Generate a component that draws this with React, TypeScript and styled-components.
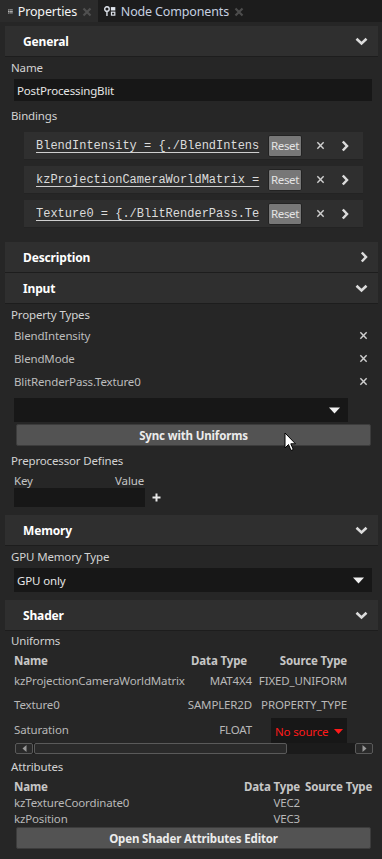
import React from 'react';
import styled, { createGlobalStyle } from 'styled-components';

const Global = createGlobalStyle`
  html, body { margin: 0; padding: 0; background: #262626; }
  body { font-family: "Noto Sans", "Open Sans", sans-serif; font-size: 11.5px; letter-spacing: -0.15px; color: #d2d2d2; }
  * { box-sizing: border-box; }
`;

const Page = styled.div`
  position: relative;
  width: 382px;
  height: 859px;
  overflow: hidden;
  background: #262626;
`;

const TabBar = styled.div`
  display: flex;
  height: 22px;
  background: #1c1c1c;
`;

const Tab = styled.div<{ $active?: boolean; $w: number }>`
  display: flex;
  align-items: center;
  gap: 5px;
  height: 22px;
  width: ${p => p.$w}px;
  padding-left: ${p => (p.$active ? 8 : 6)}px;
  background: ${p => (p.$active ? '#2b2b2b' : 'transparent')};
  border-top: 1px solid ${p => (p.$active ? '#2b2b2b' : '#1c1c1c')};
  color: ${p => (p.$active ? '#f4f4f4' : '#c6d0e0')};
  font-size: 12.5px;
  white-space: nowrap;
`;

const TabClose = styled.span`
  margin-left: auto;
  margin-right: 6px;
  display: flex;
`;

const Panel = styled.div`
  display: flex;
  flex-direction: column;
  padding: 0 4px 0 5px;
`;

const Header = styled.div<{ $top: number }>`
  display: flex;
  align-items: center;
  justify-content: space-between;
  height: 31px;
  margin-top: ${p => p.$top}px;
  padding: 0 10px 0 18px;
  background: #2f2f2f;
  border-bottom: 1px solid #1d1d1d;
  color: #ffffff;
  font-weight: 700;
  font-size: 12px;
`;

const Label = styled.div<{ $top: number; $h?: number }>`
  margin-top: ${p => p.$top}px;
  padding-left: 6px;
  height: ${p => p.$h ?? 16}px;
  line-height: ${p => p.$h ?? 16}px;
  color: #d3d3d3;
`;

const TextField = styled.div<{ $top: number; $w: number; $h: number }>`
  display: flex;
  align-items: center;
  justify-content: space-between;
  margin: ${p => p.$top}px 0 0 9px;
  width: ${p => p.$w}px;
  height: ${p => p.$h}px;
  padding: 0 8px 0 3px;
  background: #171717;
  color: #e6e6e6;
`;

const BindingList = styled.div`
  display: flex;
  flex-direction: column;
  gap: 6px;
  margin: 8px 0 0 19px;
  width: 339px;
`;

const BindingRow = styled.div`
  display: flex;
  align-items: center;
  height: 28px;
  padding-left: 12px;
  background: #2f2f2f;
  border-bottom: 1px solid #232323;
`;

const BindingText = styled.span`
  width: 224px;
  overflow: hidden;
  white-space: nowrap;
  font-family: "Liberation Mono", "DejaVu Sans Mono", monospace;
  font-size: 12px;
  letter-spacing: 0;
  color: #dcdcdc;
  text-decoration: underline;
  text-underline-offset: 3px;
  text-decoration-color: #cfcfcf;
`;

const ResetButton = styled.span`
  display: flex;
  align-items: center;
  justify-content: center;
  margin-left: 8px;
  width: 34px;
  height: 22px;
  background: #777777;
  border: 1px solid #222;
  border-radius: 2px;
  color: #e4e4e4;
  font-size: 11.5px;
  letter-spacing: -0.4px;
`;

const IconSlot = styled.span<{ $w: number }>`
  display: flex;
  align-items: center;
  justify-content: center;
  width: ${p => p.$w}px;
`;

const PropList = styled.div`
  display: flex;
  flex-direction: column;
  margin-top: 1px;
`;

const PropRow = styled.div`
  display: flex;
  align-items: center;
  justify-content: space-between;
  height: 23px;
  padding: 0 10px 0 9px;
  color: #bdbdbd;
`;

const WideButton = styled.div<{ $top: number }>`
  display: flex;
  align-items: center;
  justify-content: center;
  margin: ${p => p.$top}px 0 0 11px;
  width: 355px;
  height: 22px;
  background: #535353;
  border: 1px solid #3c3c3c;
  border-radius: 2px;
  color: #ececec;
  font-weight: 700;
`;

const KVHead = styled.div`
  display: flex;
  justify-content: space-between;
  margin: 5px 0 0 9px;
  width: 130px;
  height: 14px;
  line-height: 14px;
  color: #c4c4c4;
`;

const KVRow = styled.div`
  display: flex;
  align-items: center;
  gap: 7px;
`;

const Grid = styled.div<{ $cols: string; $top: number }>`
  display: grid;
  grid-template-columns: ${p => p.$cols};
  margin: ${p => p.$top}px 0 0 9px;
  align-items: center;
  color: #b8b8b8;
`;

const Cell = styled.div<{ $h: number; $align?: 'left' | 'right'; $bold?: boolean; $pr?: number; $pl?: number }>`
  height: ${p => p.$h}px;
  line-height: ${p => p.$h}px;
  text-align: ${p => p.$align ?? 'left'};
  font-weight: ${p => (p.$bold ? 700 : 400)};
  color: ${p => (p.$bold ? '#c6c6c6' : '#b8b8b8')};
  padding-right: ${p => p.$pr ?? 0}px;
  padding-left: ${p => p.$pl ?? 0}px;
  white-space: nowrap;
`;

const SourceSelect = styled.div`
  display: flex;
  align-items: center;
  justify-content: space-between;
  justify-self: end;
  width: 76px;
  height: 25px;
  margin-top: 1px;
  padding: 2px 4px 0 4px;
  background: #171717;
  color: #ff1a1a;
  white-space: nowrap;
`;

const Scrollbar = styled.div`
  display: flex;
  align-items: stretch;
  margin-left: 10px;
  width: 358px;
  height: 11px;
  background: #1b1b1b;
`;

const ScrollButton = styled.div`
  display: flex;
  align-items: center;
  justify-content: center;
  width: 18px;
  background: #2a2a2a;
  border: 1px solid #5a5a5a;
  border-radius: 2px;
`;

const ScrollThumb = styled.div`
  width: 253px;
  margin-left: 1px;
  background: #2a2a2a;
  border: 1px solid #5a5a5a;
  border-radius: 2px;
`;

const ScrollGap = styled.div`
  flex: 1;
`;

const Cursor = styled.svg`
  position: absolute;
  left: 284px;
  top: 432px;
`;

const ChevronDown = () => (
  <svg width="13" height="9" viewBox="0 0 13 9">
    <polyline points="1.5,1.8 6.5,6.5 11.5,1.8" fill="none" stroke="#dcdcdc" strokeWidth="2.6" />
  </svg>
);

const ChevronRight = ({ c = '#dcdcdc' }: { c?: string }) => (
  <svg width="8" height="12" viewBox="0 0 8 12">
    <polyline points="1.8,1.5 6,6 1.8,10.5" fill="none" stroke={c} strokeWidth="2.5" />
  </svg>
);

const Cross = ({ s = 9, c = '#cfcfcf', w = 1.6 }: { s?: number; c?: string; w?: number }) => (
  <svg width={s} height={s} viewBox="0 0 10 10">
    <path d="M1.5 1.5 L8.5 8.5 M8.5 1.5 L1.5 8.5" stroke={c} strokeWidth={w} fill="none" />
  </svg>
);

const TriDown = ({ c = '#f0f0f0', w = 11 }: { c?: string; w?: number }) => (
  <svg width={w} height="7" viewBox="0 0 11 7">
    <polygon points="0,0.5 11,0.5 5.5,6.5" fill={c} />
  </svg>
);

const Plus = () => (
  <svg width="9" height="9" viewBox="0 0 9 9">
    <path d="M4.5 0.5 V8.5 M0.5 4.5 H8.5" stroke="#e8e8e8" strokeWidth="2" />
  </svg>
);

const ListIcon = () => (
  <svg width="11" height="9" viewBox="0 0 11 9">
    <rect x="0" y="0" width="2" height="2" fill="#e8e8e8" />
    <rect x="3" y="0" width="8" height="1.6" fill="#e8e8e8" />
    <rect x="0" y="3.5" width="2" height="2" fill="#e8e8e8" />
    <rect x="3" y="3.5" width="8" height="1.6" fill="#e8e8e8" />
    <rect x="0" y="7" width="2" height="2" fill="#e8e8e8" />
    <rect x="3" y="7" width="8" height="1.6" fill="#e8e8e8" />
  </svg>
);

const NodeIcon = () => (
  <svg width="12" height="11" viewBox="0 0 12 11">
    <circle cx="3" cy="3" r="2.3" fill="none" stroke="#dfe4ec" strokeWidth="1.4" />
    <path d="M3 5.4 V10" stroke="#dfe4ec" strokeWidth="1.4" />
    <rect x="7" y="1" width="4.5" height="3.5" fill="#dfe4ec" />
    <rect x="7.6" y="6.2" width="3.4" height="3" fill="none" stroke="#dfe4ec" strokeWidth="1.2" />
  </svg>
);

const SmallTri = ({ dir }: { dir: 'l' | 'r' }) => (
  <svg width="5" height="7" viewBox="0 0 5 7">
    <polygon points={dir === 'l' ? '4.5,0 4.5,7 0.5,3.5' : '0.5,0 0.5,7 4.5,3.5'} fill="#9a9a9a" />
  </svg>
);

const bindings = [
  'BlendIntensity = {./BlendIntens',
  'kzProjectionCameraWorldMatrix =',
  'Texture0 = {./BlitRenderPass.Te',
];

const propTypes = ['BlendIntensity', 'BlendMode', 'BlitRenderPass.Texture0'];

export default function App() {
  return (
    <Page>
      <Global />
      <TabBar>
        <Tab $active $w={98}>
          <ListIcon />
          <span>Properties</span>
          <TabClose><Cross s={10} c="#505050" w={2.2} /></TabClose>
        </Tab>
        <Tab $w={152}>
          <NodeIcon />
          <span>Node Components</span>
          <TabClose><Cross s={10} c="#4c4c4c" w={2.2} /></TabClose>
        </Tab>
      </TabBar>
      <Panel>
        <Header $top={4}>
          <span>General</span>
          <ChevronDown />
        </Header>
        <Label $top={3}>Name</Label>
        <TextField $top={3} $w={358} $h={22}>PostProcessingBlit</TextField>
        <Label $top={7}>Bindings</Label>
        <BindingList>
          {bindings.map(b => (
            <BindingRow key={b}>
              <BindingText>{b}</BindingText>
              <ResetButton>Reset</ResetButton>
              <IconSlot $w={36}><Cross /></IconSlot>
              <IconSlot $w={14}><ChevronRight /></IconSlot>
            </BindingRow>
          ))}
        </BindingList>
        <Header $top={14}>
          <span>Description</span>
          <ChevronRight />
        </Header>
        <Header $top={0}>
          <span>Input</span>
          <ChevronDown />
        </Header>
        <Label $top={3}>Property Types</Label>
        <PropList>
          {propTypes.map(p => (
            <PropRow key={p}>
              <span>{p}</span>
              <Cross />
            </PropRow>
          ))}
        </PropList>
        <TextField $top={5} $w={334} $h={24}>
          <span />
          <TriDown />
        </TextField>
        <WideButton $top={2}>Sync with Uniforms</WideButton>
        <Label $top={7}>Preprocessor Defines</Label>
        <KVHead>
          <span>Key</span>
          <span>Value</span>
        </KVHead>
        <KVRow>
          <TextField $top={0} $w={131} $h={19} />
          <Plus />
        </KVRow>
        <Header $top={8}>
          <span>Memory</span>
          <ChevronDown />
        </Header>
        <Label $top={3}>GPU Memory Type</Label>
        <TextField $top={3} $w={358} $h={24}>
          <span>GPU only</span>
          <TriDown />
        </TextField>
        <Header $top={8}>
          <span>Shader</span>
          <ChevronDown />
        </Header>
        <Label $top={2}>Uniforms</Label>
        <Grid $cols="166px 72px 95px" $top={4}>
          <Cell $h={16} $bold>Name</Cell>
          <Cell $h={16} $bold $align="right" $pr={5}>Data Type</Cell>
          <Cell $h={16} $bold $align="right">Source Type</Cell>
          <Cell $h={24}>kzProjectionCameraWorldMatrix</Cell>
          <Cell $h={24} $align="right">MAT4X4</Cell>
          <Cell $h={24} $align="right">FIXED_UNIFORM</Cell>
          <Cell $h={24}>Texture0</Cell>
          <Cell $h={24} $align="right">SAMPLER2D</Cell>
          <Cell $h={24} $align="right">PROPERTY_TYPE</Cell>
          <Cell $h={26}>Saturation</Cell>
          <Cell $h={26} $align="right">FLOAT</Cell>
          <SourceSelect>
            <span>No source</span>
            <TriDown c="#ff1a1a" w={9} />
          </SourceSelect>
        </Grid>
        <Scrollbar>
          <ScrollButton><SmallTri dir="l" /></ScrollButton>
          <ScrollThumb />
          <ScrollGap />
          <ScrollButton><SmallTri dir="r" /></ScrollButton>
        </Scrollbar>
        <Label $top={5}>Attributes</Label>
        <Grid $cols="226px 60px 73px" $top={4}>
          <Cell $h={16} $bold>Name</Cell>
          <Cell $h={16} $bold $align="right">Data Type</Cell>
          <Cell $h={16} $bold $pl={5}>Source Type</Cell>
          <Cell $h={16}>kzTextureCoordinate0</Cell>
          <Cell $h={16} $align="right">VEC2</Cell>
          <Cell $h={16} />
          <Cell $h={15}>kzPosition</Cell>
          <Cell $h={15} $align="right">VEC3</Cell>
          <Cell $h={15} />
        </Grid>
        <WideButton $top={1}>Open Shader Attributes Editor</WideButton>
      </Panel>
      <Cursor width="14" height="21" viewBox="0 0 14 21">
        <path d="M1 1 L1 16 L4.5 12.5 L7 18.5 L9.3 17.5 L6.8 11.8 L11.5 11.8 Z" fill="#ffffff" stroke="#000000" strokeWidth="1" strokeLinejoin="round" />
      </Cursor>
    </Page>
  );
}
